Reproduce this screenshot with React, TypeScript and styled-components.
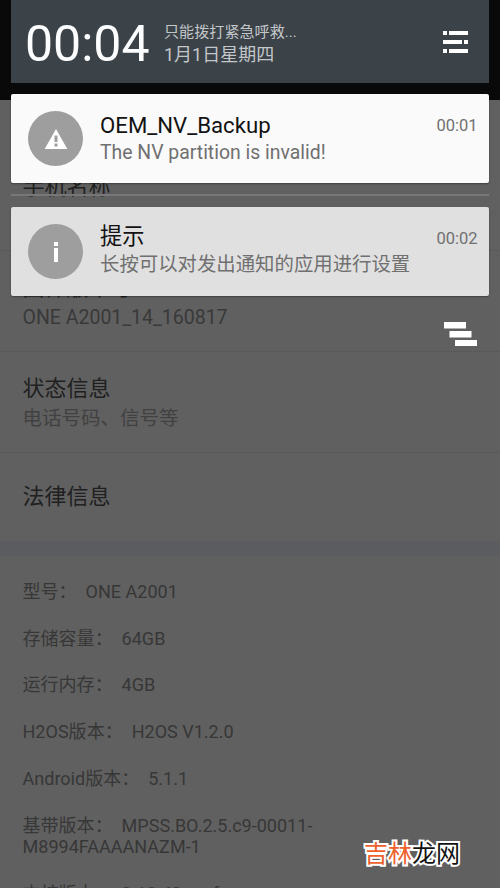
import React from "react";
import styled, { createGlobalStyle } from "styled-components";

const GlobalStyle = createGlobalStyle`
  * { box-sizing: border-box; }
  body {
    margin: 0;
    overflow: hidden;
    background: #606060;
    font-family: Roboto, "Noto Sans CJK SC", sans-serif;
  }
`;

const Screen = styled.main`
  position: relative;
  width: 500px;
  height: 888px;
  overflow: hidden;
  background: #606060;
`;

const AppBar = styled.div`
  height: 100px;
  background: #090909;
`;

const SettingsList = styled.section`
  padding-top: 50px;
`;

const SettingRow = styled.div<{ $single?: boolean }>`
  height: ${(p) => (p.$single ? 88 : 101)}px;
  padding: ${(p) => (p.$single ? 30 : 23)}px 22.5px 0;
  border-bottom: ${(p) => (p.$single ? "none" : "1px solid #595959")};
`;

const SettingTitle = styled.div`
  font-size: 22px;
  line-height: 28px;
  color: #202020;
`;

const SettingSummary = styled.div<{ $latin?: boolean }>`
  margin-top: 3px;
  font-size: 19.5px;
  line-height: 26px;
  color: ${(p) => (p.$latin ? "#393939" : "#414141")};
`;

const Separator = styled.div`
  height: 15px;
  background: #5a5c5f;
`;

const InfoList = styled.section`
  display: flex;
  flex-direction: column;
  gap: 25px;
  padding: 25px 22.5px 0;
`;

const InfoLine = styled.div`
  font-size: 18.05px;
  line-height: 21.7px;
  white-space: pre;
  color: #373737;
`;

const Shade = styled.div`
  position: absolute;
  top: 0;
  left: 11px;
  width: 478px;
  display: flex;
  flex-direction: column;
`;

const StatusHeader = styled.header`
  height: 83px;
  display: flex;
  align-items: flex-start;
  padding: 0 21px 0 14px;
  background: #3b4248;
`;

const Clock = styled.div`
  width: 139px;
  padding-top: 14px;
  font-size: 50px;
  line-height: 60px;
  color: #fbfdfe;
`;

const StatusText = styled.div`
  flex: 1;
  padding-top: 21px;
  color: #c3c7ca;
`;

const Carrier = styled.div`
  font-size: 15.1px;
  line-height: 22px;
`;

const DateText = styled.div`
  font-size: 18px;
  line-height: 24px;
`;

const QuickIcon = styled.svg`
  margin-top: 31px;
  width: 25px;
  height: 23px;
  fill: #fff;
`;

const Card = styled.article<{ $dim?: boolean }>`
  height: 89px;
  display: flex;
  border-radius: 2px;
  padding: 0 11.5px 0 17px;
  background: ${(p) => (p.$dim ? "#e0e0e0" : "#fafafa")};
  box-shadow: 0 1px 2px rgba(0, 0, 0, 0.35);
`;

const CardIcon = styled.div`
  width: 55px;
  height: 55px;
  margin: 17px 17px 0 0;
  border-radius: 50%;
  display: grid;
  place-items: center;
  background: #9e9e9e;
`;

const CardBody = styled.div<{ $raised?: boolean }>`
  flex: 1;
  padding-top: ${(p) => (p.$raised ? 15 : 17)}px;
`;

const CardTitle = styled.div`
  font-size: 22.2px;
  line-height: 28px;
  color: #121212;
`;

const CardText = styled.div<{ $lowered?: boolean }>`
  margin-top: ${(p) => (p.$lowered ? 1 : 0)}px;
  font-size: 19.4px;
  line-height: 28px;
  color: #707070;
`;

const CardTime = styled.time`
  padding-top: 21px;
  font-size: 16.5px;
  line-height: 22px;
  color: #707070;
`;

const ShadeGap = styled.div`
  height: 11px;
`;

const DividerGap = styled.div`
  height: 24px;
  display: flex;
  align-items: center;
`;

const ShadeDivider = styled.div`
  width: 100%;
  height: 2px;
  background: #777;
`;

const ClearIcon = styled.svg`
  align-self: flex-end;
  margin: 26px 11px 0 0;
  width: 34px;
  height: 25px;
  fill: #fff;
`;

const Watermark = styled.div`
  position: absolute;
  left: 364px;
  top: 836px;
  font-family: "Noto Sans CJK SC", sans-serif;
  font-size: 24px;
  line-height: 32px;
  font-weight: 400;
  color: #111;
  -webkit-text-stroke: 4px #fff;
  paint-order: stroke fill;
`;

const WatermarkAccent = styled.span`
  color: #f0622d;
`;

const infoLines = [
  "型号：  ONE A2001",
  "存储容量：  64GB",
  "运行内存：  4GB",
  "H2OS版本：  H2OS V1.2.0",
  "Android版本：  5.1.1",
  "基带版本：  MPSS.BO.2.5.c9-00011-\nM8994FAAAANAZM-1",
  "内核版本：  3.10.49-perf",
];

export default function App() {
  return (
    <Screen>
      <GlobalStyle />
      <AppBar />
      <SettingsList>
        <SettingRow>
          <SettingTitle>手机名称</SettingTitle>
        </SettingRow>
        <SettingRow>
          <SettingTitle>固件版本号</SettingTitle>
          <SettingSummary $latin>ONE A2001_14_160817</SettingSummary>
        </SettingRow>
        <SettingRow>
          <SettingTitle>状态信息</SettingTitle>
          <SettingSummary>电话号码、信号等</SettingSummary>
        </SettingRow>
        <SettingRow $single>
          <SettingTitle>法律信息</SettingTitle>
        </SettingRow>
      </SettingsList>
      <Separator />
      <InfoList>
        {infoLines.map((line) => (
          <InfoLine key={line}>{line}</InfoLine>
        ))}
      </InfoList>

      <Shade>
        <StatusHeader>
          <Clock>00:04</Clock>
          <StatusText>
            <Carrier>只能拨打紧急呼救...</Carrier>
            <DateText>1月1日星期四</DateText>
          </StatusText>
          <QuickIcon viewBox="0 0 25 23">
            <path d="M0 0h4v4H0zM6 0h19v4H6zM0 9h19v4H0zM21 9h4v4h-4zM0 18h4v4H0zM6 18h19v4H6z" />
          </QuickIcon>
        </StatusHeader>
        <ShadeGap />
        <Card>
          <CardIcon>
            <svg width="24" height="24" viewBox="0 0 24 24">
              <path
                d="M12 2 .7 22h22.600zM10.500 8.500v6.500h3V8.500zm0 8v3h3v-3z"
                fill="#fff"
                fillRule="evenodd"
              />
            </svg>
          </CardIcon>
          <CardBody>
            <CardTitle>OEM_NV_Backup</CardTitle>
            <CardText>The NV partition is invalid!</CardText>
          </CardBody>
          <CardTime>00:01</CardTime>
        </Card>
        <DividerGap>
          <ShadeDivider />
        </DividerGap>
        <Card $dim>
          <CardIcon>
            <svg width="6" height="20" viewBox="0 0 6 20">
              <path d="M1 0h4v4H1zM1 6h4v14H1z" fill="#fff" />
            </svg>
          </CardIcon>
          <CardBody $raised>
            <CardTitle>提示</CardTitle>
            <CardText $lowered>长按可以对发出通知的应用进行设置</CardText>
          </CardBody>
          <CardTime>00:02</CardTime>
        </Card>
        <ClearIcon viewBox="0 0 34 25">
          <path d="M0 0h22v6.500H0zM5.500 9h22v6.500h-22zM11 18h22v6H11z" />
        </ClearIcon>
      </Shade>

      <Watermark>
        <WatermarkAccent>吉林</WatermarkAccent>龙网
      </Watermark>
    </Screen>
  );
}
